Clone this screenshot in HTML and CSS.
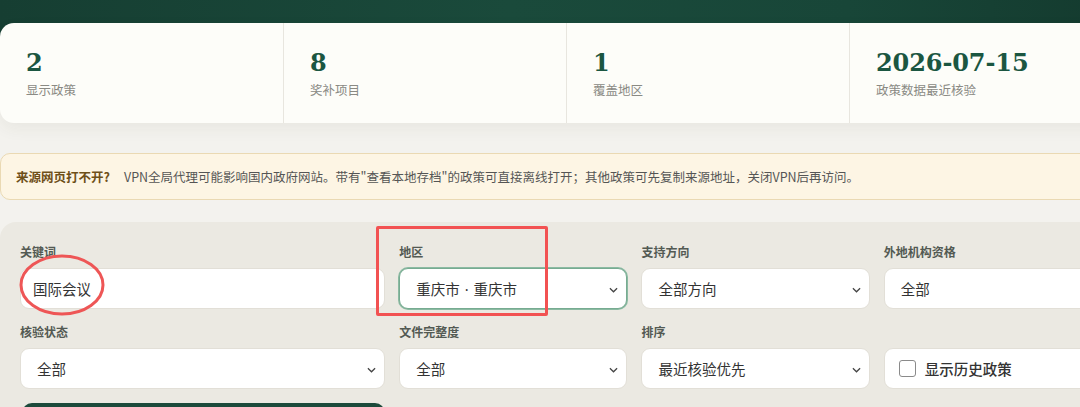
FILE: index.html
```html
<!DOCTYPE html>
<html lang="zh-CN">
<head>
<meta charset="utf-8">
<title>政策查询</title>
<link rel="stylesheet" href="styles.css">
</head>
<body>
<div class="page">
  <header class="hero"></header>

  <section class="stats">
    <div class="stat">
      <div class="stat-num">2</div>
      <div class="stat-label">显示政策</div>
    </div>
    <div class="stat">
      <div class="stat-num">8</div>
      <div class="stat-label">奖补项目</div>
    </div>
    <div class="stat">
      <div class="stat-num">1</div>
      <div class="stat-label">覆盖地区</div>
    </div>
    <div class="stat">
      <div class="stat-num">2026-07-15</div>
      <div class="stat-label">政策数据最近核验</div>
    </div>
  </section>

  <div class="notice">
    <strong class="notice-title">来源网页打不开?</strong>
    <span class="notice-text">VPN全局代理可能影响国内政府网站。带有"查看本地存档"的政策可直接离线打开；其他政策可先复制来源地址，关闭VPN后再访问。</span>
  </div>

  <section class="filters">
    <div class="field">
      <label class="field-label">关键词</label>
      <div class="control control-input">国际会议</div>
    </div>
    <div class="field">
      <label class="field-label">地区</label>
      <div class="control control-select is-focused">重庆市<span class="sep">·</span>重庆市<svg class="chev" viewBox="0 0 10 6"><path d="M1 1l4 4 4-4"/></svg></div>
    </div>
    <div class="field">
      <label class="field-label">支持方向</label>
      <div class="control control-select">全部方向<svg class="chev" viewBox="0 0 10 6"><path d="M1 1l4 4 4-4"/></svg></div>
    </div>
    <div class="field">
      <label class="field-label">外地机构资格</label>
      <div class="control control-select">全部<svg class="chev" viewBox="0 0 10 6"><path d="M1 1l4 4 4-4"/></svg></div>
    </div>

    <div class="field">
      <label class="field-label">核验状态</label>
      <div class="control control-select">全部<svg class="chev" viewBox="0 0 10 6"><path d="M1 1l4 4 4-4"/></svg></div>
    </div>
    <div class="field">
      <label class="field-label">文件完整度</label>
      <div class="control control-select">全部<svg class="chev" viewBox="0 0 10 6"><path d="M1 1l4 4 4-4"/></svg></div>
    </div>
    <div class="field">
      <label class="field-label">排序</label>
      <div class="control control-select">最近核验优先<svg class="chev" viewBox="0 0 10 6"><path d="M1 1l4 4 4-4"/></svg></div>
    </div>
    <div class="field field-end">
      <div class="control control-check"><span class="box"></span>显示历史政策</div>
    </div>

    <button class="btn-primary" type="button" aria-label="查询"></button>

    <!-- hand-drawn marks over the form -->
    <svg class="mark mark-ellipse" viewBox="0 0 86 62"><ellipse cx="43" cy="31" rx="41" ry="29"/></svg>
    <div class="mark mark-box"></div>
  </section>
</div>
</body>
</html>
```

FILE: styles.css
```css
* { box-sizing: border-box; }

html, body {
  margin: 0;
  padding: 0;
  background: #f3f2ee;
  overflow: hidden;
}

body {
  font-family: "Noto Sans CJK SC", "Noto Sans", sans-serif;
  color: #333;
}

.page {
  width: 1132px;
  position: relative;
}

.hero {
  height: 40px;
  background: linear-gradient(90deg, #163e32 0%, #1a4a3b 45%, #184638 75%, #143a2e 100%);
}

/* stats card */
.stats {
  margin-top: -17px;
  display: grid;
  grid-template-columns: repeat(4, 1fr);
  background: #fdfdf9;
  border-radius: 14px;
  height: 100px;
  box-shadow: 0 6px 16px rgba(60, 60, 40, 0.06);
}

.stat {
  padding: 25px 26px 0;
  border-left: 1px solid #e8e6df;
}

.stat:first-child { border-left: none; }

.stat-num {
  font-family: "DejaVu Serif", "Liberation Serif", serif;
  font-weight: 700;
  font-size: 24px;
  line-height: 30px;
  color: #1b5641;
  letter-spacing: -0.1px;
}

.stat-label {
  margin-top: 3px;
  font-size: 12.5px;
  line-height: 18px;
  color: #8a8a84;
}

/* notice */
.notice {
  margin-top: 30px;
  height: 47px;
  display: flex;
  align-items: center;
  padding: 0 15px;
  background: #fdf5e4;
  border: 1px solid #ead9b3;
  border-radius: 10px;
  font-size: 12.5px;
}

.notice-title {
  color: #6e4f18;
  font-weight: 700;
  margin-right: 14px;
}

.notice-text {
  color: #555;
}

/* filter panel */
.filters {
  position: relative;
  margin-top: 22px;
  background: #ebe9e2;
  border-radius: 16px;
  padding: 22px 20px 20px;
  display: grid;
  grid-template-columns: 1.6fr 1fr 1fr 1fr;
  column-gap: 14px;
  row-gap: 15px;
}

.field {
  display: flex;
  flex-direction: column;
}

.field-end { justify-content: flex-end; }

.field-label {
  font-size: 12px;
  line-height: 16px;
  font-weight: 700;
  color: #535a53;
  margin-bottom: 8px;
}

.control {
  position: relative;
  height: 41px;
  display: flex;
  align-items: center;
  background: #fff;
  border: 1px solid #e2dfd7;
  border-radius: 9px;
  font-size: 14.5px;
  color: #333;
  white-space: nowrap;
}

.control-input { padding-left: 12px; }

.control-select { padding-left: 16px; }

.control-select.is-focused {
  border-color: #77ab91;
  box-shadow: 0 0 0 1px #8bbaa2;
}

.sep {
  font-family: "Noto Sans", sans-serif;
  margin: 0 5px;
}

.chev {
  position: absolute;
  right: 8px;
  top: 50%;
  width: 9px;
  height: 6px;
  margin-top: -2px;
  fill: none;
  stroke: #444;
  stroke-width: 1.4;
}

.control-check {
  padding-left: 14px;
  font-weight: 500;
  color: #333;
}

.box {
  width: 17px;
  height: 17px;
  border: 1.5px solid #8a8a8a;
  border-radius: 3px;
  margin-right: 9px;
  background: #fff;
}

.btn-primary {
  grid-column: 1;
  height: 42px;
  margin: -1px 0 0 2px;
  border: none;
  border-radius: 10px;
  background: #1c4a3b;
}

/* red marks */
.mark {
  position: absolute;
  pointer-events: none;
}

.mark-ellipse {
  left: 19px;
  top: 32px;
  width: 86px;
  height: 62px;
  fill: none;
  stroke: #ee5656;
  stroke-width: 3;
}

.mark-box {
  left: 376px;
  top: 4px;
  width: 172px;
  height: 90px;
  border: 3px solid #f25252;
  border-radius: 2px;
}
```
